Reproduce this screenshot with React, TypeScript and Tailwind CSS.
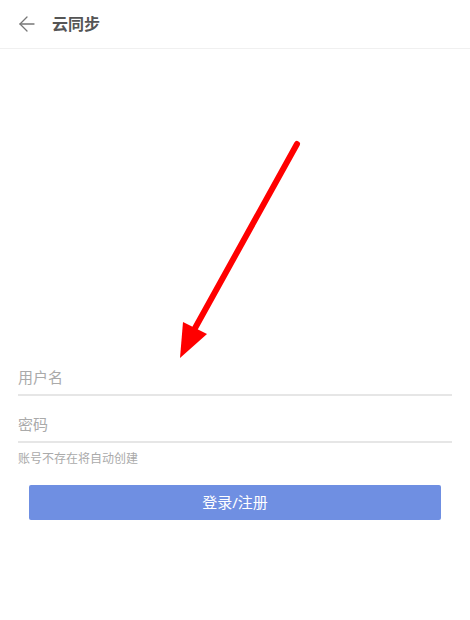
import { ArrowLeft } from 'lucide-react';

export default function App() {
  return (
    <div
      className="relative w-[470px] h-[620px] bg-white overflow-hidden"
      style={{ fontFamily: '"Noto Sans", "Noto Sans CJK SC", sans-serif' }}
    >
      <div className="h-[49px] flex items-center border-b border-[#f0f0f0]">
        <ArrowLeft className="ml-[15px] w-[24px] h-[24px] text-[#777]" strokeWidth={1.3} />
        <span className="ml-[13px] text-[16px] font-bold text-[#555]">云同步</span>
      </div>

      <div className="pt-[301px] px-[18px]">
        <div className="border-b-2 border-[#e6e6e6] h-[46px] flex items-end pb-[6px]">
          <input
            placeholder="用户名"
            className="w-full outline-none text-[15px] text-[#333] placeholder:text-[#aaa] bg-transparent"
          />
        </div>
        <div className="border-b-2 border-[#e6e6e6] h-[47px] flex items-end pb-[6px]">
          <input
            type="password"
            placeholder="密码"
            className="w-full outline-none text-[15px] text-[#333] placeholder:text-[#aaa] bg-transparent"
          />
        </div>
        <p className="mt-[8px] text-[12px] text-[#aaa] leading-[16px]">账号不存在将自动创建</p>
        <div className="px-[11px] mt-[18px]">
          <button className="w-full h-[35px] rounded-[2px] bg-[#6f8fe2] text-white text-[15px]">
            登录/注册
          </button>
        </div>
      </div>

      <svg className="absolute left-0 top-0 pointer-events-none" width="470" height="620">
        <line x1="297" y1="144" x2="194" y2="330" stroke="#ff0000" strokeWidth="6" strokeLinecap="round" />
        <polygon points="180,358 183,322 207,334" fill="#ff0000" />
      </svg>
    </div>
  );
}
